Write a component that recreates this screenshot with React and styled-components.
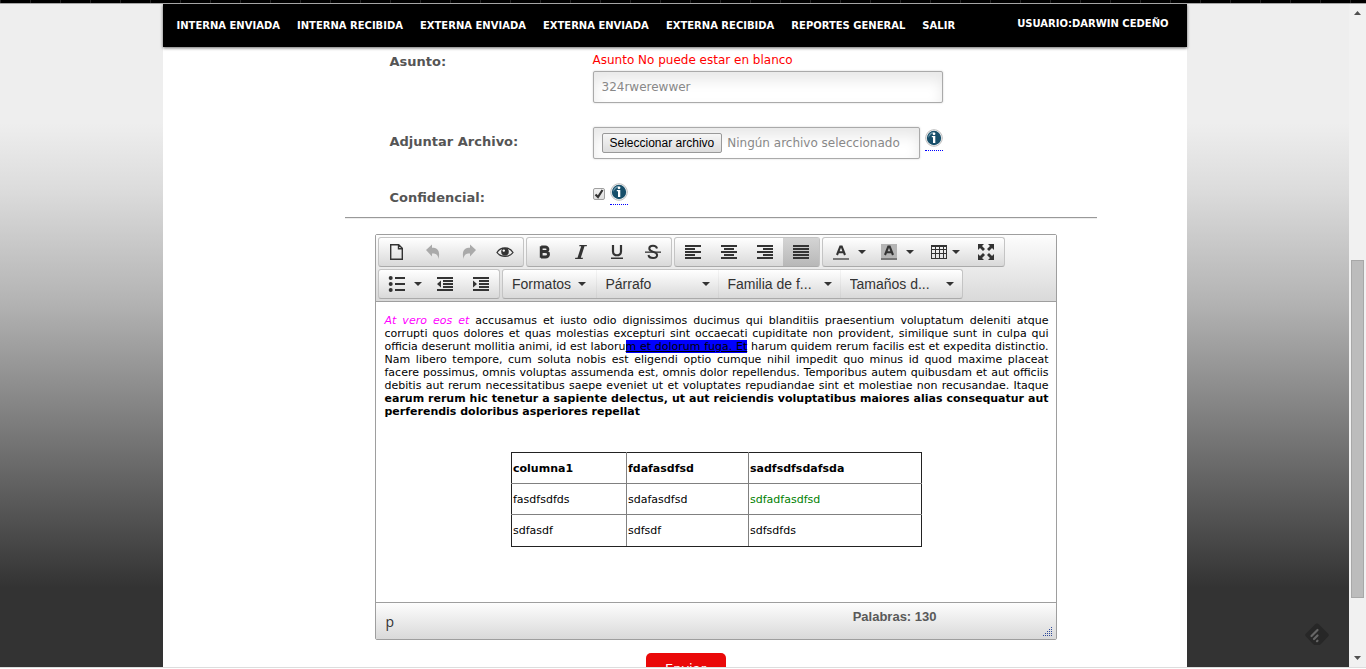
import React, { useRef } from "react";
import styled, { createGlobalStyle } from "styled-components";

const verdana = `Verdana, "DejaVu Sans", sans-serif`;
const arial = `"Liberation Sans", Arial, sans-serif`;

const GlobalStyle = createGlobalStyle`
  *, *::before, *::after { box-sizing: border-box; }
  body { margin: 0; background: #fff; font: 13px/16px ${verdana}; color: #000; }
  button, input, select { margin: 0; font: inherit; }
`;

const Shell = styled.div`
  display: flex;
  flex-direction: column;
  height: 100vh;
  overflow: hidden;
  padding-bottom: 1px;
`;
const TopStrip = styled.div`
  flex: none;
  height: 4px;
  border-bottom: 1px solid #a5a5a5;
  background: repeating-linear-gradient(90deg, #262626 0 1px, #000 1px 30px);
`;
const Viewport = styled.div`
  flex: 1;
  min-height: 0;
  display: flex;
  border-bottom: 1px solid #ddd;
`;
const Backdrop = styled.div`
  position: relative;
  flex: 1;
  min-width: 0;
  overflow: hidden;
  background: linear-gradient(#eee 0%, #eee 18%, #dcdcdc 28%, #b3b3b3 45%, #333 88%);
`;
const Page = styled.div`
  width: 100%;
  max-width: 1024px;
  min-height: 100%;
  margin: 0 auto;
  background: #fff;
`;

const Nav = styled.nav`
  display: flex;
  height: 43px;
  padding: 0 18px 0 14px;
  background: #000;
  box-shadow: 0 1px 3px rgba(0, 0, 0, 0.6);
  font-size: 10px;
  font-weight: bold;
  white-space: nowrap;
`;
const NavList = styled.ul`
  display: flex;
  gap: 17px;
  margin: 0;
  padding: 14px 0 0;
  list-style: none;
`;
const NavLink = styled.a`
  color: #fff;
  text-decoration: none;
`;
const User = styled.span`
  margin-left: auto;
  padding-top: 12px;
  color: #fff;
`;

const Form = styled.form`
  padding: 4px 90px 0 182px;
`;
const Fields = styled.div`
  display: grid;
  gap: 24px;
  padding-left: 45px;
`;
const Row = styled.div`
  display: grid;
  grid-template-columns: 203px 1fr;
  align-items: start;
`;
const Label = styled.label`
  padding-top: ${(p) => (p.$first ? 3 : 7)}px;
  color: #555;
  font-weight: bold;
`;
const FieldLine = styled.div`
  display: flex;
  align-items: flex-start;
  gap: 5px;
`;
const ErrorText = styled.div`
  padding: 1px 0 3px;
  color: #f00;
  font-size: 12px;
`;
const fieldBox = `
  height: 32px;
  padding: 0 8px;
  border: 1px solid #aaa;
  border-radius: 2px;
  background: #fff;
  box-shadow: inset 0 8px 14px #e8e8e8, 0 0 2px #ccc;
  color: #888;
  font-size: 12px;
`;
const TextInput = styled.input`
  ${fieldBox}
  display: block;
  width: 350px;
  outline: 0;
`;
const FileField = styled.div`
  ${fieldBox}
  display: flex;
  align-items: center;
  gap: 5px;
  width: 327px;
  white-space: nowrap;
`;
const FileButton = styled.button`
  height: 20px;
  padding: 0 7px;
  border: 1px solid #999;
  border-radius: 2px;
  background: linear-gradient(#f6f6f6, #ddd);
  color: #000;
  font: 12px/16px ${arial};
`;
const Checkbox = styled.input`
  appearance: none;
  width: 12px;
  height: 12px;
  margin-top: 5px;
  border: 1px solid #a0a0a0;
  border-radius: 2px;
  background: linear-gradient(#f2f2f2, #dedede);
`;
const CheckWrap = styled.span`
  position: relative;
  display: flex;
  svg {
    position: absolute;
    left: 0;
    top: 4px;
    pointer-events: none;
    visibility: hidden;
  }
  input:checked + svg { visibility: visible; }
`;
const InfoLink = styled.a`
  display: block;
  width: 18px;
  height: 22px;
  margin-top: ${(p) => p.$top || 0}px;
  border-bottom: 1px dotted #00f;
  svg { display: block; }
`;
const Rule = styled.hr`
  height: 2px;
  margin: 11px 0 15px;
  border: 0;
  border-top: 1px solid #999;
  background: #eee;
`;

const Editor = styled.section`
  margin: 0 40px 0 30px;
  border: 1px solid #9e9e9e;
  border-radius: 2px;
`;
const Toolbar = styled.div`
  display: grid;
  gap: 2px;
  padding: 2px;
  border-bottom: 1px solid #9e9e9e;
  background: linear-gradient(#fdfdfd, #d9d9d9);
`;
const ToolRow = styled.div`
  display: flex;
  gap: 2px;
`;
const Group = styled.div`
  display: flex;
  height: 30px;
  border: 1px solid #c4c4c4;
  border-bottom-color: #aaa;
  border-radius: 3px;
  background: linear-gradient(#fff, #d9d9d9);
  & > * + * { border-left: 1px solid rgba(0, 0, 0, 0.04); }
`;
const Tool = styled.button`
  display: flex;
  align-items: center;
  justify-content: center;
  gap: ${(p) => p.$gap || 8}px;
  width: ${(p) => p.$width || 36}px;
  height: 28px;
  padding: 0 0 0 ${(p) => (p.$menu ? 4 : 0)}px;
  border: 0;
  background: ${(p) => (p.$active ? "linear-gradient(#d4d4d4, #b8b8b8)" : "transparent")};
  color: #333;
  font: 14px/20px ${arial};
  &:disabled { color: #aaa; }
`;
const Caret = styled.i`
  border: 4px solid transparent;
  border-top-color: #333;
  border-bottom: 0;
`;
const ListBox = styled.span`
  position: relative;
  width: 122px;
  ${Caret} {
    position: absolute;
    right: 8px;
    top: 12px;
    pointer-events: none;
  }
`;
const Select = styled.select`
  appearance: none;
  width: 100%;
  height: 28px;
  padding: 0 20px 0 9px;
  border: 0;
  background: transparent;
  color: #333;
  font: 14px/20px ${arial};
`;
const Content = styled.div`
  min-height: 300px;
  padding: 12px 7px 34px 9px;
  font-size: 11px;
  line-height: 13px;
`;
const Paragraph = styled.p`
  margin: 0 0 34px;
  text-align: justify;
`;
const Line = styled.span`
  display: block;
  text-align-last: ${(p) => (p.$last ? "left" : "justify")};
`;
const Magenta = styled.em`
  color: #f0f;
`;
const Marked = styled.u`
  background: #00f;
`;
const DataTable = styled.table`
  width: 411px;
  margin: 0 auto;
  border: 1px solid #222;
  border-collapse: collapse;
  table-layout: fixed;
  th, td {
    height: 31px;
    padding: 0 1px;
    border: 1px solid #808080;
    text-align: left;
  }
  tr:first-child > * { border-top-color: #222; }
  tr:last-child > * { border-bottom-color: #222; height: 32px; }
  tr > :first-child { border-left-color: #222; width: 115px; }
  tr > :nth-child(2) { width: 122px; }
  tr > :last-child { border-right-color: #222; }
`;
const GreenCell = styled.td`
  color: #008000;
`;
const StatusBar = styled.div`
  display: flex;
  justify-content: space-between;
  height: 37px;
  padding: 0 3px 0 10px;
  border-top: 1px solid #9e9e9e;
  background: linear-gradient(#fdfdfd, #d9d9d9);
`;
const Path = styled.span`
  flex: 1;
  padding-top: 9px;
  color: #333;
  font: 14px/20px "Open Sans", sans-serif;
`;
const WordCount = styled.span`
  padding-top: 4px;
  color: #595959;
  font: bold 13px/20px ${arial};
`;
const Grip = styled.svg`
  align-self: flex-end;
  margin: 0 0 2px 106px;
`;
const Submit = styled.button`
  display: block;
  width: 80px;
  height: 32px;
  margin: 13px 0 0 301px;
  padding: 0;
  border: 0;
  border-radius: 5px;
  background: #ea0909;
  color: #fff;
`;
const Badge = styled.a`
  position: absolute;
  right: 20px;
  bottom: 20px;
  width: 24px;
  height: 24px;
`;

const Scrollbar = styled.div`
  display: flex;
  flex-direction: column;
  align-items: center;
  width: 17px;
  background: #f1f1f1;
  svg { flex: none; }
`;
const Track = styled.div`
  flex: 1;
  width: 13px;
  display: grid;
  grid-template-rows: 239fr 338fr 52fr;
`;
const Thumb = styled.div`
  grid-row: 2;
  border: 1px solid #a8a8a8;
  background: #bcbcbc;
`;

const Svg = ({ children, size = 18 }) => (
  <svg width={size} height={size} viewBox="0 0 18 18" fill="currentColor" aria-hidden="true">
    {children}
  </svg>
);
const Lines = ({ rows }) => (
  <Svg>{rows.map(([x, w], i) => <rect key={i} x={x} y={2 + i * 3} width={w} height="2" shapeRendering="crispEdges" />)}</Svg>
);
const icons = {
  file: <Svg><path d="M2.700 1.700h8l3.600 3.600v11H2.700zM10.500 1.700v4h4" fill="none" stroke="currentColor" strokeWidth="1.400" /></Svg>,
  undo: <Svg><path d="M2 7l6-5.500v3.300c5.500 0 8.500 3 6.500 11.200-.5-4.500-2.500-5.500-6.500-5.500v3z" /></Svg>,
  redo: <Svg><path d="M16 7l-6-5.500v3.300c-5.500 0-8.500 3-6.500 11.200.5-4.500 2.500-5.500 6.500-5.500v3z" /></Svg>,
  eye: <Svg><path d="M1 9.500C4.500 3.500 13.500 3.500 17 9.500 13.500 14.500 4.500 14.500 1 9.500z" fill="none" stroke="currentColor" strokeWidth="1.300" /><circle cx="9" cy="8.800" r="3.800" /><circle cx="7.800" cy="7.600" r="1.200" fill="#fff" /></Svg>,
  bold: <Svg><path d="M5.200 3.200v11.600M5.200 4h4c3.800 0 3.500 4.500 0 4.500h-4M9 8.500c4.800 0 4.500 5.500.3 5.500H5" fill="none" stroke="currentColor" strokeWidth="2.800" /></Svg>,
  italic: <Svg><path d="M7.500 2H15l-.3 1.200h-2.200L8.800 14.800H11l-.3 1.200H3l.3-1.200h2.200L9.200 3.200H7.200z" /></Svg>,
  underline: <Svg><path d="M5 2v6.500c0 5 8 5 8 0V2" fill="none" stroke="currentColor" strokeWidth="2.200" /><rect x="3" y="14.500" width="12" height="1.500" /></Svg>,
  strike: <Svg><path d="M13 5.500C12.300 1.800 5.300 2 5.300 5.500c0 4.500 7.800 2.300 7.800 6.500 0 4-8 4-8.600 0" fill="none" stroke="currentColor" strokeWidth="2" /><rect x="1" y="8.500" width="16" height="1.300" /></Svg>,
  left: <Lines rows={[[1, 16], [1, 10], [1, 16], [1, 10], [1, 16]]} />,
  center: <Lines rows={[[1, 16], [4, 10], [1, 16], [4, 10], [1, 16]]} />,
  right: <Lines rows={[[1, 16], [7, 10], [1, 16], [7, 10], [1, 16]]} />,
  justify: <Lines rows={[[1, 16], [1, 16], [1, 16], [1, 16], [1, 16]]} />,
  fore: <Svg><path d="M5 12L8.300 3.500h1.400L13 12M6.300 9.300h5.400" fill="none" stroke="currentColor" strokeWidth="2.100" /><rect x="1" y="15" width="16" height="2" fill="#777" /></Svg>,
  back: <Svg><rect x="1" y="1" width="16" height="14" fill="#b5b5b5" /><path d="M5 12L8.300 3.500h1.400L13 12M6.300 9.300h5.400" fill="none" stroke="currentColor" strokeWidth="2.100" /><rect x="1" y="15" width="16" height="2" fill="#777" /></Svg>,
  table: <Svg><path d="M1 2h16v14H1zM2 4v2h3V4zM6 4v2h3V4zM10 4v2h3V4zM14 4v2h2V4zM2 7v3h3V7zM6 7v3h3V7zM10 7v3h3V7zM14 7v3h2V7zM2 11v4h3v-4zM6 11v4h3v-4zM10 11v4h3v-4zM14 11v4h2v-4z" fillRule="evenodd" shapeRendering="crispEdges" /></Svg>,
  full: <Svg><path d="M1 1h6L5 3l3 3-2 2-3-3-2 2zM17 1v6l-2-2-3 3-2-2 3-3-2-2zM1 17v-6l2 2 3-3 2 2-3 3 2 2zM17 17h-6l2-2-3-3 2-2 3 3 2-2z" /></Svg>,
  list: <Svg><circle cx="2.700" cy="3" r="2" /><circle cx="2.700" cy="9" r="2" /><circle cx="2.700" cy="15" r="2" /><path d="M7 2h10v2H7zM7 8h10v2H7zM7 14h10v2H7z" /></Svg>,
  outdent: <Svg><path d="M1 2h16v2H1zM7 5h10v2H7zM7 8h10v2H7zM7 11h10v2H7zM1 14h16v2H1zM5 5.500v7L1 9z" /></Svg>,
  indent: <Svg><path d="M1 2h16v2H1zM7 5h10v2H7zM7 8h10v2H7zM7 11h10v2H7zM1 14h16v2H1zM1 5.500v7L5 9z" /></Svg>,
};

const IconTool = ({ icon, label, menu, width, ...rest }) => (
  <Tool type="button" aria-label={label} $menu={menu} $width={width || (menu ? 48 : 36)} {...rest}>
    {icons[icon]}
    {menu && <Caret />}
  </Tool>
);

const Dropdown = ({ text, label }) => (
  <ListBox>
    <Select aria-label={label}><option>{text}</option></Select>
    <Caret />
  </ListBox>
);

const Info = ({ top, label }) => (
  <InfoLink href="#ayuda" aria-label={label} $top={top}>
    <svg width="18" height="18" viewBox="0 0 18 18" aria-hidden="true">
      <circle cx="9" cy="9" r="8.300" fill="#fff" stroke="#bbb" />
      <circle cx="9" cy="9" r="7.200" fill="#174e69" />
      <path d="M3 9a6 6 0 0 1 7-6C7 4 5 6 3 9z" fill="#6d98ac" />
      <circle cx="9" cy="4.800" r="1.400" fill="#fff" />
      <path d="M6.800 7h3.500v7H8V8.300H6.800z" fill="#fff" />
    </svg>
  </InfoLink>
);

const links = ["INTERNA ENVIADA", "INTERNA RECIBIDA", "EXTERNA ENVIADA", "EXTERNA ENVIADA", "EXTERNA RECIBIDA", "REPORTES GENERAL", "SALIR"];
const gripDots = [[8], [6, 8], [4, 6, 8], [2, 4, 6, 8], [0, 2, 4, 6, 8]];

export default function App() {
  const fileRef = useRef(null);
  return (
    <Shell>
      <GlobalStyle />
      <TopStrip />
      <Viewport>
        <Backdrop>
          <Page>
            <Nav>
              <NavList>
                {links.map((text, i) => <li key={i}><NavLink href="#menu">{text}</NavLink></li>)}
              </NavList>
              <User>USUARIO:DARWIN CEDEÑO</User>
            </Nav>
            <Form onSubmit={(e) => e.preventDefault()}>
              <Fields>
                <Row>
                  <Label $first htmlFor="asunto">Asunto:</Label>
                  <div>
                    <ErrorText id="asunto-error">Asunto No puede estar en blanco</ErrorText>
                    <TextInput id="asunto" defaultValue="324rwerewwer" aria-describedby="asunto-error" />
                  </div>
                </Row>
                <Row>
                  <Label htmlFor="archivo">Adjuntar Archivo:</Label>
                  <FieldLine>
                    <FileField>
                      <input ref={fileRef} type="file" hidden />
                      <FileButton id="archivo" type="button" onClick={() => fileRef.current.click()}>Seleccionar archivo</FileButton>
                      <span>Ningún archivo seleccionado</span>
                    </FileField>
                    <Info top={2} label="Ayuda sobre el archivo" />
                  </FieldLine>
                </Row>
                <Row>
                  <Label htmlFor="confidencial">Confidencial:</Label>
                  <FieldLine>
                    <CheckWrap>
                      <Checkbox id="confidencial" type="checkbox" defaultChecked />
                      <svg width="12" height="12" viewBox="0 0 12 12" aria-hidden="true">
                        <path d="M2.500 7.500l2.500 2.500 4.500-7" fill="none" stroke="#333" strokeWidth="2.200" />
                      </svg>
                    </CheckWrap>
                    <Info label="Ayuda sobre confidencial" />
                  </FieldLine>
                </Row>
              </Fields>
              <Rule />
              <Editor>
                <Toolbar>
                  <ToolRow>
                    <Group>
                      <IconTool icon="file" label="Nuevo documento" />
                      <IconTool icon="undo" label="Deshacer" disabled />
                      <IconTool icon="redo" label="Rehacer" disabled />
                      <IconTool icon="eye" label="Vista previa" />
                    </Group>
                    <Group>
                      <IconTool icon="bold" label="Negrita" />
                      <IconTool icon="italic" label="Cursiva" />
                      <IconTool icon="underline" label="Subrayado" />
                      <IconTool icon="strike" label="Tachado" />
                    </Group>
                    <Group>
                      <IconTool icon="left" label="Alinear a la izquierda" />
                      <IconTool icon="center" label="Centrar" />
                      <IconTool icon="right" label="Alinear a la derecha" />
                      <IconTool icon="justify" label="Justificar" $active aria-pressed="true" />
                    </Group>
                    <Group>
                      <IconTool icon="fore" label="Color del texto" menu />
                      <IconTool icon="back" label="Color de fondo" menu />
                      <IconTool icon="table" label="Tabla" menu width={49} $gap={4} />
                      <IconTool icon="full" label="Pantalla completa" />
                    </Group>
                  </ToolRow>
                  <ToolRow>
                    <Group>
                      <IconTool icon="list" label="Lista" menu />
                      <IconTool icon="outdent" label="Reducir sangría" />
                      <IconTool icon="indent" label="Aumentar sangría" />
                    </Group>
                    <Group>
                      <Tool type="button" $width={93} $gap={7}>Formatos<Caret /></Tool>
                      <Dropdown text="Párrafo" label="Bloque" />
                      <Dropdown text="Familia de f..." label="Familia de fuente" />
                      <Dropdown text="Tamaños d..." label="Tamaños de fuente" />
                    </Group>
                  </ToolRow>
                </Toolbar>
                <Content>
                  <Paragraph>
                    <Line><Magenta>At vero eos et</Magenta> accusamus et iusto odio dignissimos ducimus qui blanditiis praesentium voluptatum deleniti atque</Line>
                    <Line>corrupti quos dolores et quas molestias excepturi sint occaecati cupiditate non provident, similique sunt in culpa qui</Line>
                    <Line>officia deserunt mollitia animi, id est laboru<Marked>m et dolorum fuga. Et</Marked> harum quidem rerum facilis est et expedita distinctio.</Line>
                    <Line>Nam libero tempore, cum soluta nobis est eligendi optio cumque nihil impedit quo minus id quod maxime placeat</Line>
                    <Line>facere possimus, omnis voluptas assumenda est, omnis dolor repellendus. Temporibus autem quibusdam et aut officiis</Line>
                    <Line>debitis aut rerum necessitatibus saepe eveniet ut et voluptates repudiandae sint et molestiae non recusandae. Itaque</Line>
                    <Line as="b">earum rerum hic tenetur a sapiente delectus, ut aut reiciendis voluptatibus maiores alias consequatur aut</Line>
                    <Line as="b" $last>perferendis doloribus asperiores repellat</Line>
                  </Paragraph>
                  <DataTable>
                    <tbody>
                      <tr><th>columna1</th><th>fdafasdfsd</th><th>sadfsdfsdafsda</th></tr>
                      <tr><td>fasdfsdfds</td><td>sdafasdfsd</td><GreenCell>sdfadfasdfsd</GreenCell></tr>
                      <tr><td>sdfasdf</td><td>sdfsdf</td><td>sdfsdfds</td></tr>
                    </tbody>
                  </DataTable>
                </Content>
                <StatusBar>
                  <Path>p</Path>
                  <WordCount>Palabras: 130</WordCount>
                  <Grip width="10" height="10" viewBox="0 0 10 10" fill="#2f4a9a" shapeRendering="crispEdges" aria-hidden="true">
                    {gripDots.map((xs, r) => xs.map((x) => <rect key={`${r}-${x}`} x={x} y={r * 2} width="1" height="1" />))}
                  </Grip>
                </StatusBar>
              </Editor>
              <Submit type="submit">Enviar</Submit>
            </Form>
          </Page>
          <Badge href="#feedly" aria-label="Feedly">
            <svg width="24" height="24" viewBox="0 0 24 24" aria-hidden="true">
              <path d="M10 1.500q2-2 4 0l9 9q1.500 1.500 0 3l-7 7.500q-1 1-2 1h-4q-1 0-2-1L1 13.500q-1.500-1.500 0-3z" fill="#272727" />
              <path d="M6.500 13l6-6M9 16l3.500-3.500M12 18.200l.5-.5" stroke="#666" strokeWidth="2.200" strokeLinecap="round" />
            </svg>
          </Badge>
        </Backdrop>
        <Scrollbar aria-hidden="true">
          <svg width="17" height="17" viewBox="0 0 17 17"><path d="M5 11l3.500-4 3.500 4z" fill="#505050" /></svg>
          <Track><Thumb /></Track>
          <svg width="17" height="17" viewBox="0 0 17 17"><path d="M5 6l3.500 4L12 6z" fill="#505050" /></svg>
        </Scrollbar>
      </Viewport>
    </Shell>
  );
}
